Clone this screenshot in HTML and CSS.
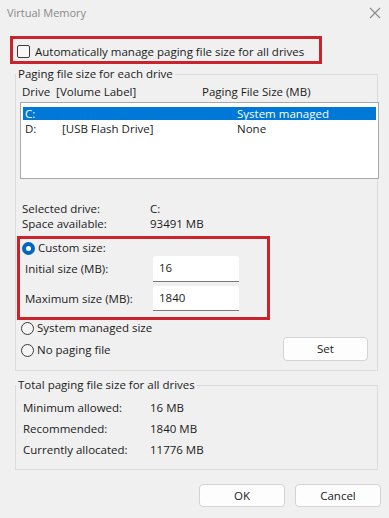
FILE: index.html
```html
<!DOCTYPE html>
<html>
<head>
<meta charset="utf-8">
<link rel="stylesheet" href="styles.css">
</head>
<body>
<div class="dialog">
  <div class="titlebar">
    <span class="title">Virtual Memory</span>
    <svg class="close" width="12" height="12" viewBox="0 0 12 12"><path d="M1 1L11 11M11 1L1 11" stroke="#8a8a8a" stroke-width="1.1" fill="none"/></svg>
  </div>

  <div class="auto-box">
    <span class="checkbox"></span>
    <span>Automatically manage paging file size for all drives</span>
  </div>

  <fieldset class="group group-drives">
    <legend>Paging file size for each drive</legend>
    <div class="list-head">
      <span class="col-drive">Drive&nbsp; [Volume Label]</span>
      <span class="col-size">Paging File Size (MB)</span>
    </div>
    <div class="listbox">
      <div class="list-row selected">
        <span class="c1">C:</span><span class="c2"></span><span class="c3">System managed</span>
      </div>
      <div class="list-row">
        <span class="c1">D:</span><span class="c2">[USB Flash Drive]</span><span class="c3">None</span>
      </div>
    </div>

    <div class="info">
      <span>Selected drive:</span><span>C:</span>
      <span>Space available:</span><span>93491 MB</span>
    </div>

    <div class="custom-box">
      <div class="radio-line"><span class="radio checked"></span><span>Custom size:</span></div>
      <div class="field-row first"><span class="field-label">Initial size (MB):</span><span class="input">16</span></div>
      <div class="field-row second"><span class="field-label">Maximum size (MB):</span><span class="input">1840</span></div>
    </div>

    <div class="bottom-opts">
      <div class="opts">
        <div class="radio-line"><span class="radio"></span><span>System managed size</span></div>
        <div class="radio-line"><span class="radio"></span><span>No paging file</span></div>
      </div>
      <span class="btn btn-set">Set</span>
    </div>
  </fieldset>

  <fieldset class="group group-total">
    <legend>Total paging file size for all drives</legend>
    <div class="totals">
      <span>Minimum allowed:</span><span>16 MB</span>
      <span>Recommended:</span><span>1840 MB</span>
      <span>Currently allocated:</span><span>11776 MB</span>
    </div>
  </fieldset>

  <div class="actions">
    <span class="btn">OK</span>
    <span class="btn">Cancel</span>
  </div>
</div>
</body>
</html>
```

FILE: styles.css
```css
* { box-sizing: border-box; }
html, body {
  margin: 0;
  padding: 0;
  background: #f0f0f0;
}
body {
  font-family: "Open Sans", "Noto Sans", sans-serif;
  font-size: 11.5px;
  line-height: 16px;
  color: #1b1b1b;
  width: 389px;
  height: 518px;
  overflow: hidden;
}
.dialog {
  width: 389px;
  height: 518px;
}
.titlebar {
  height: 28px;
  display: flex;
  align-items: center;
  justify-content: space-between;
  padding: 0 7px 2px 7px;
}
.title {
  color: #8a8a8a;
  font-size: 11px;
}
.close { margin-right: 1px; }

.auto-box {
  margin: 8px 0 0 10px;
  width: 312px;
  height: 28px;
  border: 3px solid #c9232b;
  display: flex;
  align-items: center;
  gap: 5px;
  padding: 3px 0 0 4px;
}
.checkbox {
  width: 13px;
  height: 13px;
  border: 1px solid #3a3a3a;
  border-radius: 2px;
  background: #f7f7f7;
  flex: none;
}

.group {
  margin: 0 11px 0 15px;
  padding: 0;
  border: 1px solid #dcdcdc;
  min-width: 0;
}
.group legend {
  padding: 0 2px;
  margin-left: 0;
}
.group-drives {
  margin-top: 2px;
  height: 305px;
}
.list-head {
  display: flex;
  padding: 2px 0 0 6px;
  height: 19px;
}
.col-drive { width: 180px; }
.listbox {
  margin: 1px -2px 0 4px;
  height: 77px;
  background: #fff;
  border: 1px solid #a9a9a9;
  padding: 4px 2px 0 2px;
}
.list-row {
  display: flex;
  height: 13px;
  line-height: 13px;
  margin-bottom: 2px;
  padding-left: 2px;
}
.list-row.selected {
  background: #0078d7;
  color: #fff;
}
.c1 { width: 37px; }
.c2 { width: 175px; }

.info {
  display: grid;
  grid-template-columns: 128px auto;
  padding: 22px 0 0 6px;
  line-height: 15px;
}

.custom-box {
  margin: 5px 0 0 1px;
  width: 253px;
  height: 84px;
  border: 3px solid #c9232b;
  padding: 1px 0 0 2px;
}
.radio-line {
  display: flex;
  align-items: center;
  gap: 3px;
  height: 16px;
}
.radio {
  width: 13px;
  height: 13px;
  border-radius: 50%;
  border: 1px solid #3a3a3a;
  background: #f5f5f5;
  flex: none;
}
.radio.checked {
  border: 4px solid #0067c0;
  background: #fff;
}
.field-row {
  display: flex;
  align-items: center;
  padding-left: 3px;
}
.field-row.first { height: 26px; }
.field-row.second { height: 25px; margin-top: 4px; }
.field-label { width: 128px; }
.input {
  width: 86px;
  height: 100%;
  background: #fff;
  border-bottom: 1px solid #7a7a7a;
  border-radius: 3px 3px 0 0;
  padding: 4px 0 0 6px;
}

.bottom-opts {
  display: flex;
  justify-content: space-between;
  padding: 0 9px 0 5px;
}
.opts {
  display: flex;
  flex-direction: column;
  gap: 6px;
}
.btn {
  display: inline-flex;
  align-items: center;
  justify-content: center;
  width: 85px;
  height: 24px;
  background: #fdfdfd;
  border: 1px solid #d3d3d3;
  border-radius: 4px;
}
.btn-set { margin-top: 17px; }

.group-total {
  margin-top: 6px;
  height: 93px;
}
.totals {
  display: grid;
  grid-template-columns: 127px auto;
  row-gap: 5px;
  padding: 7px 0 0 7px;
}

.actions {
  display: flex;
  justify-content: flex-end;
  gap: 10px;
  padding: 14px 8px 0 0;
}
.actions .btn { width: 86px; height: 23px; }
```
